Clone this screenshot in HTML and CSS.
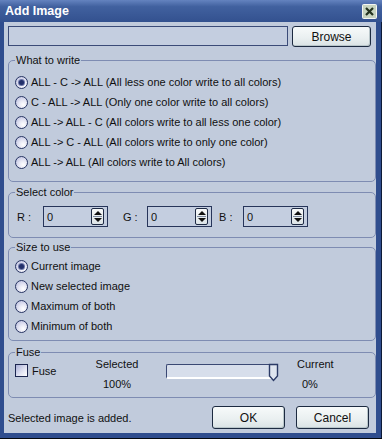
FILE: index.html
```html
<!DOCTYPE html>
<html lang="en">

<head>
  <meta charset="UTF-8">
  <title>Add Image</title>
  <link rel="stylesheet" href="styles.css">
</head>

<body>
  <div class="window">
    <div class="titlebar">
      <span class="title">Add Image</span>
      <span class="close">
        <svg width="15" height="15" viewBox="0 0 15 15">
          <rect x="0.5" y="0.5" width="14" height="14" rx="1" fill="#c7d4c0" stroke="#f4f6f2" />
          <path d="M4 4 L11 11 M11 4 L4 11" stroke="#24331f" stroke-width="2.2" />
        </svg>
      </span>
    </div>

    <div class="client">
      <div class="file-row">
        <div class="path"></div>
        <button class="btn browse" type="button">Browse</button>
      </div>

      <fieldset class="group write">
        <legend>What to write</legend>
        <label class="option"><span class="radio checked"></span>ALL - C -&gt; ALL (All less one color write to all colors)</label>
        <label class="option"><span class="radio"></span>C - ALL -&gt; ALL (Only one color write to all colors)</label>
        <label class="option"><span class="radio"></span>ALL -&gt; ALL - C (All colors write to all less one color)</label>
        <label class="option"><span class="radio"></span>ALL -&gt; C - ALL (All colors write to only one color)</label>
        <label class="option"><span class="radio"></span>ALL -&gt; ALL (All colors write to All colors)</label>
      </fieldset>

      <fieldset class="group color">
        <legend>Select color</legend>
        <div class="color-row">
          <span class="color-label first">R :</span>
          <div class="spin"><span>0</span><span class="spin-btn"><i class="up"></i><i class="down"></i></span></div>
          <span class="color-label second">G :</span>
          <div class="spin"><span>0</span><span class="spin-btn"><i class="up"></i><i class="down"></i></span></div>
          <span class="color-label third">B :</span>
          <div class="spin"><span>0</span><span class="spin-btn"><i class="up"></i><i class="down"></i></span></div>
        </div>
      </fieldset>

      <fieldset class="group size">
        <legend>Size to use</legend>
        <label class="option"><span class="radio checked"></span>Current image</label>
        <label class="option"><span class="radio"></span>New selected image</label>
        <label class="option"><span class="radio"></span>Maximum of both</label>
        <label class="option"><span class="radio"></span>Minimum of both</label>
      </fieldset>

      <fieldset class="group fuse">
        <legend>Fuse</legend>
        <div class="fuse-row">
          <label class="check-label"><span class="checkbox"></span>Fuse</label>
          <div class="percent selected">
            <span>Selected</span>
            <span>100%</span>
          </div>
          <div class="slider">
            <svg class="thumb" width="11" height="19" viewBox="0 0 11 19">
              <path d="M1.5 1.5 H9.5 V13 L5.5 17.5 L1.5 13 Z" fill="#dfe5ef" stroke="#2b3a66" stroke-width="1.4" />
            </svg>
          </div>
          <div class="percent current">
            <span>Current</span>
            <span class="zero">0%</span>
          </div>
        </div>
      </fieldset>

      <div class="footer">
        <span class="status">Selected image is added.</span>
        <button class="btn ok" type="button">OK</button>
        <button class="btn cancel" type="button">Cancel</button>
      </div>
    </div>
  </div>
</body>

</html>
```

FILE: styles.css
```css
* {
  box-sizing: border-box;
}

body {
  margin: 0;
  font-family: "Liberation Sans", Arial, sans-serif;
  font-size: 11px;
  color: #101010;
}

.window {
  width: 382px;
  height: 439px;
  display: flex;
  flex-direction: column;
  background: #2f4d8e;
  box-shadow: inset 0 -1px #05070c, inset -1px 0 #0d1a36;
}

.titlebar {
  height: 22px;
  flex: none;
  display: flex;
  align-items: center;
  justify-content: space-between;
  padding: 0 5px 0 5px;
  background: linear-gradient(#6483bf, #41619f 30%, #33518f);
}

.title {
  color: white;
  font-weight: bold;
  font-size: 12.5px;
}

.close svg {
  display: block;
}

.client {
  flex: 1;
  margin: 0 6px 6px 4px;
  padding: 4px 0 0 4px;
  background: #c1cbdc;
  display: flex;
  flex-direction: column;
}

/* path + browse */
.file-row {
  display: flex;
  align-items: flex-start;
  gap: 4px;
  padding-right: 5px;
  height: 21px;
}

.path {
  width: 280px;
  height: 20px;
  border: 1px solid #3b4b78;
  background: #c4cee0;
}

.btn {
  font-family: inherit;
  font-size: 12px;
  color: #101010;
  border: 1px solid #1c2a40;
  border-radius: 3px;
  background: linear-gradient(#f7fafa, #e9eff0 60%, #d9e2e4);
  box-shadow: inset -1px -1px #b9c6ca;
  padding: 0;
}

.browse {
  width: 79px;
  height: 21px;
}

/* groups */
.group {
  margin: 0;
  padding: 0 0 0 6px;
  min-width: 0;
  border: 1px solid #7e8cb2;
  border-radius: 5px;
}

.group legend {
  padding: 0 1px;
  line-height: 14px;
}

.write {
  margin-top: 6px;
  padding-top: 5px;
  padding-bottom: 9px;
}

.color {
  margin-top: 3px;
  padding-top: 7px;
  padding-bottom: 10px;
}

.size {
  margin-top: 2px;
  padding-top: 2px;
  padding-bottom: 4px;
}

.fuse {
  margin-top: 4px;
}

.option {
  display: flex;
  align-items: center;
  gap: 3px;
  height: 20px;
  white-space: nowrap;
}

.radio {
  width: 13px;
  height: 13px;
  flex: none;
  border-radius: 50%;
  border: 1px solid #283563;
  background: radial-gradient(circle at 65% 70%, #ffffff 0%, #e6e7f4 40%, #b4b8dc 100%);
  position: relative;
}

.radio.checked::after {
  content: "";
  position: absolute;
  left: 3px;
  top: 3px;
  width: 5px;
  height: 5px;
  border-radius: 50%;
  background: #23306a;
  box-shadow: 0 0 0 1px #6c77a8;
}

/* rgb row */
.color-row {
  display: flex;
  align-items: center;
  height: 21px;
}

.color-label {
  width: 24px;
}

.color-label.first {
  margin-left: 2px;
  width: 26px;
}

.color-label.second {
  margin-left: 15px;
}

.color-label.third {
  margin-left: 7px;
}

.spin {
  width: 65px;
  height: 21px;
  border: 1px solid #27355a;
  background: #c4cee0;
  display: flex;
  align-items: center;
  justify-content: space-between;
  padding: 0 3px 0 3px;
}

.spin-btn {
  width: 13px;
  height: 17px;
  border: 1px solid #1e2a44;
  border-radius: 2px;
  background: linear-gradient(#f8fafa, #dde4e8);
  display: flex;
  flex-direction: column;
  align-items: center;
  justify-content: space-between;
  padding: 2px 0;
  position: relative;
}

.spin-btn::before {
  content: "";
  position: absolute;
  left: 1px;
  right: 1px;
  top: 7px;
  height: 1px;
  background: #7d8aa0;
}

.spin-btn i {
  width: 0;
  height: 0;
  border-left: 4px solid transparent;
  border-right: 4px solid transparent;
}

.spin-btn .up {
  border-bottom: 4px solid #111;
}

.spin-btn .down {
  border-top: 4px solid #111;
}

/* fuse row */
.fuse-row {
  display: flex;
  align-items: flex-start;
  height: 38px;
}

.check-label {
  display: flex;
  align-items: center;
  gap: 4px;
  width: 72px;
  height: 13px;
  margin-top: 5px;
}

.checkbox {
  width: 13px;
  height: 13px;
  border: 1px solid #1c2650;
  background: linear-gradient(135deg, #aab0d8, #e3e5f3 60%, #ffffff);
}

.percent {
  display: flex;
  flex-direction: column;
  gap: 6px;
  margin-top: -2px;
  line-height: 14px;
}

.percent.selected {
  width: 60px;
  align-items: center;
}

.percent.current {
  margin-left: 21px;
}

.percent .zero {
  margin-left: 5px;
}

.slider {
  position: relative;
  width: 110px;
  height: 15px;
  margin-top: 5px;
  margin-left: 19px;
  background: #d7deeb;
  border-left: 1px solid #3a4873;
  border-top: 1px solid #3a4873;
  border-bottom: 2px solid #ffffff;
  border-radius: 2px 0 0 2px;
}

.slider .thumb {
  position: absolute;
  right: -3px;
  top: -2px;
}

/* footer */
.footer {
  display: flex;
  align-items: center;
  margin-top: 8px;
  padding-right: 7px;
  height: 23px;
}

.status {
  flex: 1;
}

.ok,
.cancel {
  width: 73px;
  height: 23px;
}

.cancel {
  margin-left: 11px;
}
```
